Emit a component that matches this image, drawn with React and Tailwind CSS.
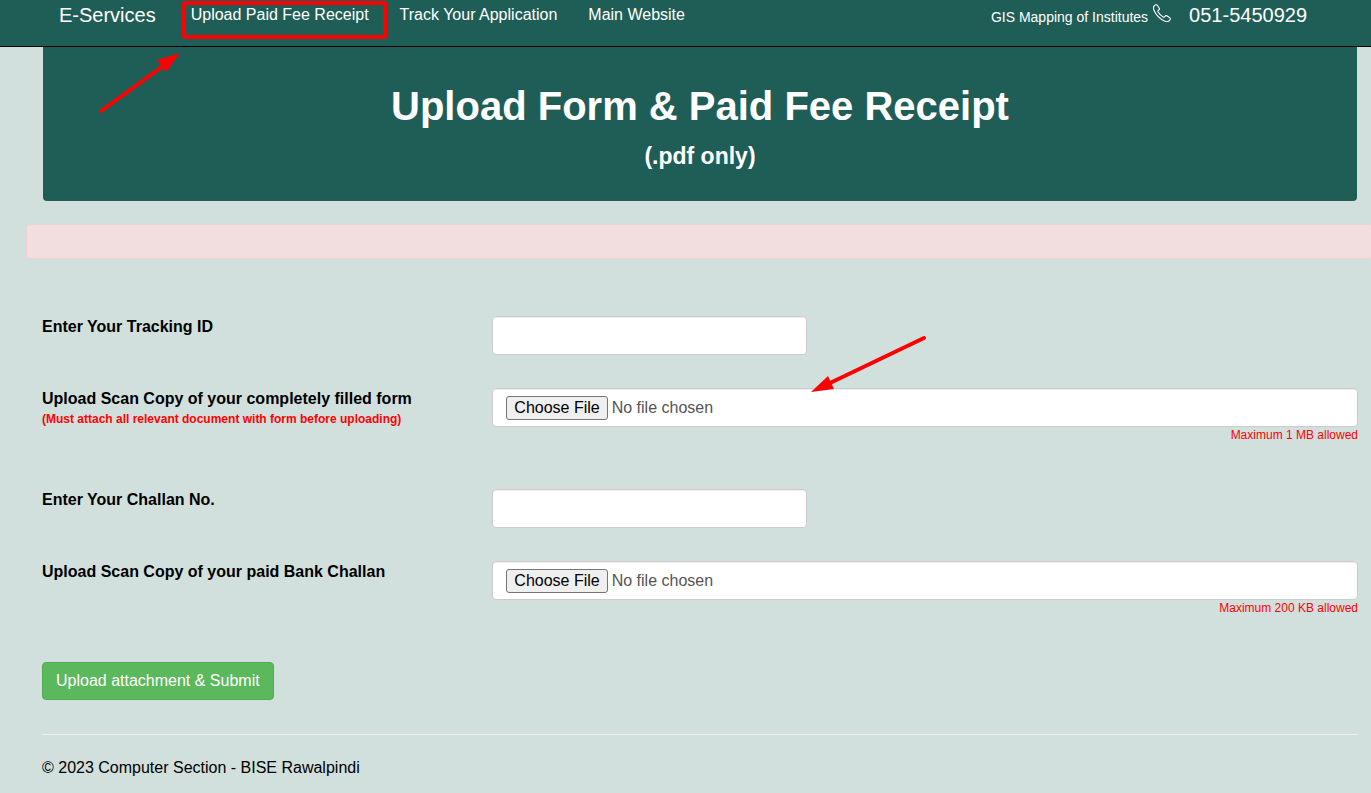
import React, {useState} from 'react'

const navLinks = [
    {
        name: "Upload Paid Fee Receipt",
        active: true
    },
    {
        name: "Track Your Application"
    },
    {
        name: "Main Website"
    }
]

const PhoneIcon = () => (
    <svg viewBox="0 0 18 18" className="w-[18px] h-[18px]" fill="none" stroke="currentColor" strokeWidth="1.1" strokeLinejoin="round" aria-hidden="true">
        <path d="M1.2 1.8C2 .8 3.6.3 4.300 1.200L6.300 4.200C6.700 5 6.300 5.700 5.500 6.200C4.800 6.700 4.700 7.200 5.100 8C6.300 10 8 11.700 10 12.900C10.800 13.300 11.300 13.200 11.800 12.500C12.300 11.800 13 11.400 13.800 11.800L16.800 13.700C17.700 14.400 17.300 15.900 16.200 16.800C15 17.700 13.300 17.700 11.500 16.900C6.500 14.700 3.300 11.500 1.100 6.500C.300 4.700.300 3 1.200 1.800Z" />
    </svg>
)

const TextField = ({id, label, value, onChange}) => (
    <div className="grid grid-cols-3 -mx-4">
        <label htmlFor={id} className="px-4 pt-px font-bold leading-5">{label}</label>
        <div className="col-span-2 pl-[17px] pr-4">
            <input
            id={id}
            type="text"
            value={value}
            onChange={e => onChange(e.target.value)}
            className="block w-[315px] h-[39px] px-3 bg-white text-[#555] border border-[#ccc] rounded shadow-[inset_0_1px_1px_rgba(0,0,0,0.075)]" />
        </div>
    </div>
)

const FileField = ({id, label, note, limit}) => (
    <div className="grid grid-cols-3 -mx-4">
        <label htmlFor={id} className="px-4 pt-px font-bold leading-5">
            {label}
            {note && <span className="block text-[12px] text-[#f00]">{note}</span>}
        </label>
        <div className="col-span-2 pl-[17px] pr-4">
            <input
            id={id}
            type="file"
            className="block w-full h-[39px] px-[13px] py-[7px] bg-white text-[#555] leading-6 border border-[#ccc] rounded shadow-[inset_0_1px_1px_rgba(0,0,0,0.075)] file:h-6 file:mr-1 file:px-[7px] file:bg-[#efefef] file:text-black file:leading-5 file:border file:border-solid file:border-[#767676] file:rounded-[3px]" />
            <p className="text-right text-[12px] leading-4 text-[#f00]">{limit}</p>
        </div>
    </div>
)

const App = () => {
    const [trackingId, setTrackingId] = useState('')
    const [challanNo, setChallanNo] = useState('')

    return (
        <div className="relative min-h-screen overflow-hidden bg-[#d1e0dd] text-base text-black font-['Liberation_Sans',Arial,sans-serif]">
            <nav className="flex items-start justify-between h-[47px] pl-[59px] pr-16 bg-[#1f5e56] text-white border-b border-black">
                <div className="flex items-center h-[30px]">
                    <a href="#" className="mr-[35px] text-[20px]">E-Services</a>
                    <div className="flex gap-[31px]">
                        {
                            navLinks.map(link => (
                                <a key={link.name} href="#" className="relative">
                                    {link.name}
                                    {link.active && <span className="absolute -left-[9px] -right-[18px] -top-0.5 h-[38px] border-4 border-[#f00] rounded-[3px]"></span>}
                                </a>
                            ))
                        }
                    </div>
                </div>
                <div className="flex items-center h-[30px]">
                    <a href="#" className="mt-1 text-[14px]">GIS Mapping of Institutes</a>
                    <span className="mb-1 ml-[5px] mr-[18px]"><PhoneIcon /></span>
                    <a href="tel:0515450929" className="text-[20px]">051-5450929</a>
                </div>
            </nav>

            <main className="pl-[42px] pr-[13px]">
                <header className="mx-px h-[154px] pt-[35px] bg-[#1f5e56] text-white text-center font-bold rounded-b">
                    <h1 className="text-[40px] leading-[48px]">Upload Form & Paid Fee Receipt</h1>
                    <h2 className="mt-[14px] text-[23px] leading-6">(.pdf only)</h2>
                </header>

                <div className="-mx-4 mt-[23px] h-[35px] bg-[#f2dede] border border-[#f0d2d5] rounded"></div>

                <form className="pt-[57px]" onSubmit={e => e.preventDefault()}>
                    <TextField id="tracking" label="Enter Your Tracking ID" value={trackingId} onChange={setTrackingId} />
                    <div className="mt-[33px]">
                        <FileField
                        id="form-file"
                        label="Upload Scan Copy of your completely filled form"
                        note="(Must attach all relevant document with form before uploading)"
                        limit="Maximum 1 MB allowed" />
                    </div>
                    <div className="mt-[46px]">
                        <TextField id="challan" label="Enter Your Challan No." value={challanNo} onChange={setChallanNo} />
                    </div>
                    <div className="mt-[33px]">
                        <FileField
                        id="challan-file"
                        label="Upload Scan Copy of your paid Bank Challan"
                        limit="Maximum 200 KB allowed" />
                    </div>
                    <button type="submit" className="block mt-[46px] h-[38px] px-[13px] bg-[#5cb85c] text-white border border-[#4cae4c] rounded">Upload attachment & Submit</button>
                </form>

                <footer className="mt-[34px] pt-[21px] border-t border-[#eee]">
                    <p>© 2023 Computer Section - BISE Rawalpindi</p>
                </footer>
            </main>

            {/* arrows pointing at the nav link and the file picker */}
            <svg className="absolute left-[95px] top-[50px] w-[90px] h-[66px] pointer-events-none" viewBox="0 0 90 66" aria-hidden="true">
                <path d="M6 61L68 16" stroke="#f00" strokeWidth="4" strokeLinecap="round" />
                <path d="M85 3L62 10L71 22Z" fill="#f00" />
            </svg>
            <svg className="absolute left-[808px] top-[332px] w-[122px] h-[64px] pointer-events-none" viewBox="0 0 122 64" aria-hidden="true">
                <path d="M116 6L22 51" stroke="#f00" strokeWidth="4" strokeLinecap="round" />
                <path d="M3 60L20 44L26 57Z" fill="#f00" />
            </svg>
        </div>
    );
}

export default App;
